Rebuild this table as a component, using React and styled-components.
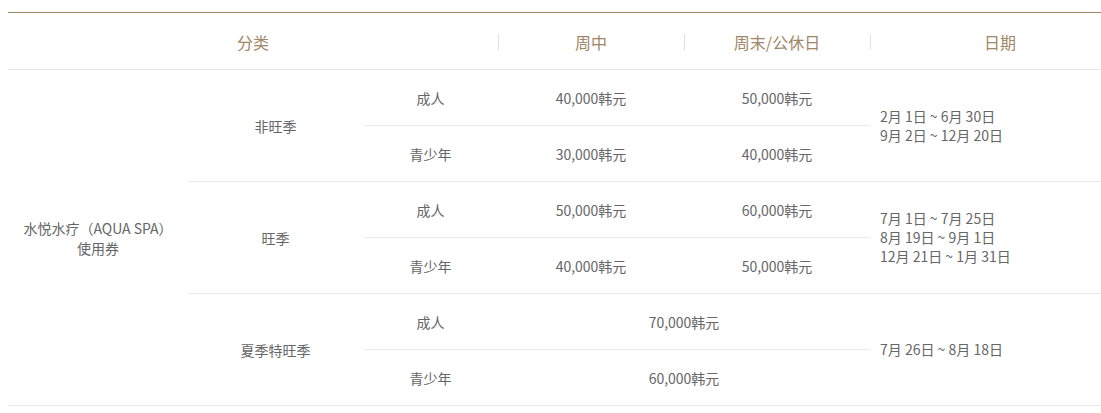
import styled, { createGlobalStyle } from "styled-components";

const GlobalStyle = createGlobalStyle`
  html, body {
    margin: 0;
    background: #fff;
    overflow: hidden;
  }
  body {
    font-family: "Noto Sans CJK SC", "Noto Sans", sans-serif;
  }
`;

const Page = styled.div`
  padding: 12px 0 0 8px;
`;

const Table = styled.div`
  width: 1122px;
  display: grid;
  grid-template-columns: 180px 175px 135px 186px 186px 1fr;
`;

const Head = styled.div`
  grid-column: 1 / -1;
  display: grid;
  grid-template-columns: 490px 186px 186px 1fr;
  height: 58px;
  border-top: 1px solid #9c8465;
  border-bottom: 1px solid #e6e6e6;
  box-sizing: border-box;
`;

const HeadCell = styled.div`
  position: relative;
  display: flex;
  align-items: center;
  justify-content: center;
  font-size: 16px;
  color: #a08767;
  padding-top: 2px;

  &::before {
    content: "";
    display: ${(p) => (p.$divider ? "block" : "none")};
    position: absolute;
    left: 0;
    top: 21px;
    height: 16px;
    width: 1px;
    background: #e2e2e2;
  }
`;

const Cell = styled.div`
  grid-row: ${(p) => p.$row} / span ${(p) => p.$span || 1};
  grid-column: ${(p) => p.$col} / span ${(p) => p.$colSpan || 1};
  display: flex;
  align-items: center;
  justify-content: ${(p) => (p.$left ? "flex-start" : "center")};
  padding-left: ${(p) => (p.$left ? "10px" : "0")};
  text-align: ${(p) => (p.$left ? "left" : "center")};
  height: ${(p) => (p.$span || 1) * 56}px;
  box-sizing: border-box;
  border-bottom: 1px solid #ececec;
  font-size: 14px;
  line-height: ${(p) => (p.$left ? "19px" : "20px")};
  color: #666;
`;

const Body = styled.div`
  grid-column: 1 / -1;
  display: grid;
  grid-template-columns: subgrid;
  grid-template-rows: repeat(6, 56px);
`;

const seasons = [
  {
    name: "非旺季",
    rows: [
      ["成人", "40,000韩元", "50,000韩元"],
      ["青少年", "30,000韩元", "40,000韩元"],
    ],
    dates: ["2月 1日 ~ 6月 30日", "9月 2日 ~ 12月 20日"],
  },
  {
    name: "旺季",
    rows: [
      ["成人", "50,000韩元", "60,000韩元"],
      ["青少年", "40,000韩元", "50,000韩元"],
    ],
    dates: ["7月 1日 ~ 7月 25日", "8月 19日 ~ 9月 1日", "12月 21日 ~ 1月 31日"],
  },
  {
    name: "夏季特旺季",
    rows: [
      ["成人", "70,000韩元"],
      ["青少年", "60,000韩元"],
    ],
    dates: ["7月 26日 ~ 8月 18日"],
  },
];

const App = () => {
  return (
    <Page>
      <GlobalStyle />
      <Table>
        <Head>
          <HeadCell>分类</HeadCell>
          <HeadCell $divider>周中</HeadCell>
          <HeadCell $divider>周末/公休日</HeadCell>
          <HeadCell $divider>日期</HeadCell>
        </Head>
        <Body>
          <Cell $row={1} $span={6} $col={1}>
            水悦水疗（AQUA SPA）
            <br />
            使用券
          </Cell>
          {seasons.map((s, i) => {
            const r = i * 2 + 1;
            return [
              <Cell key={s.name} $row={r} $span={2} $col={2}>
                {s.name}
              </Cell>,
              ...s.rows.map((row, j) => [
                <Cell key={`${s.name}-t${j}`} $row={r + j} $col={3}>
                  {row[0]}
                </Cell>,
                row.length === 3 ? (
                  [
                    <Cell key={`${s.name}-a${j}`} $row={r + j} $col={4}>
                      {row[1]}
                    </Cell>,
                    <Cell key={`${s.name}-b${j}`} $row={r + j} $col={5}>
                      {row[2]}
                    </Cell>,
                  ]
                ) : (
                  <Cell key={`${s.name}-c${j}`} $row={r + j} $col={4} $colSpan={2}>
                    {row[1]}
                  </Cell>
                ),
              ]),
              <Cell key={`${s.name}-d`} $row={r} $span={2} $col={6} $left>
                <div>
                  {s.dates.map((d) => (
                    <div key={d}>{d}</div>
                  ))}
                </div>
              </Cell>,
            ];
          })}
        </Body>
      </Table>
    </Page>
  );
};

export default App;
